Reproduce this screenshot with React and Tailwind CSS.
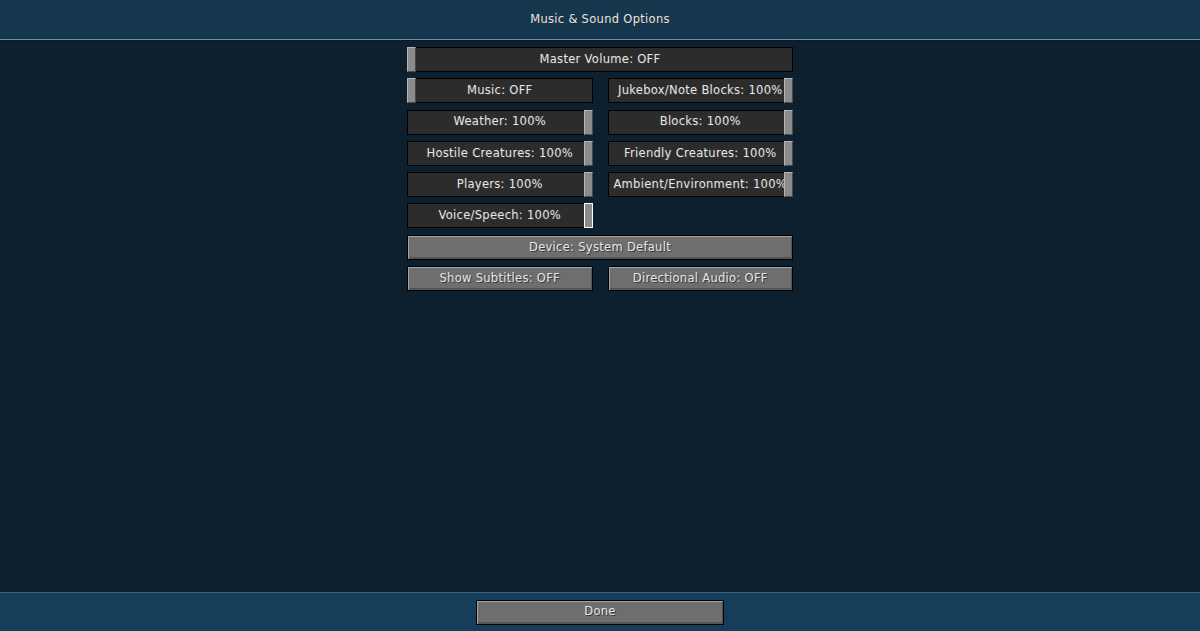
import React from 'react';

const font = { fontFamily: '"DejaVu Sans", "Liberation Sans", sans-serif' };

const Slider = ({ label, value, focused }) => {
  // handle sits at the left for OFF, at the right for 100%
  const atEnd = value > 0;
  return (
    <div className="relative h-[25px] bg-[#2c2c2c] border border-black flex items-center justify-center">
      <span className="text-[11.5px] text-[#e6e6e6] [text-shadow:1px_1px_0_#383838] tracking-[0.3px] whitespace-nowrap">
        {label}
      </span>
      <div
        className={`absolute -top-px -bottom-px w-[9px] bg-[#8b8b8b] ${
          atEnd ? '-right-px' : '-left-px'
        } ${
          focused
            ? 'border border-white'
            : 'border-t border-l border-t-[#b4b4b4] border-l-[#b4b4b4] border-b border-r border-b-[#4a4a4a] border-r-[#4a4a4a]'
        }`}
      />
    </div>
  );
};

const Button = ({ label, className = '' }) => (
  <div
    className={`h-[25px] bg-[#6e6e6e] border border-black flex items-center justify-center shadow-[inset_1px_1px_0_#a3a3a3,inset_-1px_-2px_0_#555] ${className}`}
  >
    <span className="text-[11.5px] text-[#e6e6e6] [text-shadow:1px_1px_0_#3a3a3a] tracking-[0.3px] whitespace-nowrap">
      {label}
    </span>
  </div>
);

export default function App() {
  const sliders = [
    { label: 'Music: OFF', value: 0 },
    { label: 'Jukebox/Note Blocks: 100%', value: 100 },
    { label: 'Weather: 100%', value: 100 },
    { label: 'Blocks: 100%', value: 100 },
    { label: 'Hostile Creatures: 100%', value: 100 },
    { label: 'Friendly Creatures: 100%', value: 100 },
    { label: 'Players: 100%', value: 100 },
    { label: 'Ambient/Environment: 100%', value: 100 },
    { label: 'Voice/Speech: 100%', value: 100, focused: true },
  ];

  return (
    <div className="h-screen w-full flex flex-col bg-[#0c2030]" style={font}>
      {/* Header */}
      <div className="h-[40px] shrink-0 bg-[#15384f] border-b border-b-[#6f8ea3] flex items-center justify-center">
        <span className="text-[11.5px] text-[#e6e6e6] [text-shadow:1px_1px_0_#2a2a2a] tracking-[0.3px]">
          Music &amp; Sound Options
        </span>
      </div>

      {/* Options list */}
      <div className="flex-1 flex justify-center pt-[6px] border-t border-t-[#0a1a26]">
        <div className="w-[386px] flex flex-col gap-[6.3px]">
          <Slider label="Master Volume: OFF" value={0} />
          <div className="grid grid-cols-2 gap-x-[15px] gap-y-[6.3px]">
            {sliders.map((s) => (
              <Slider key={s.label} label={s.label} value={s.value} focused={s.focused} />
            ))}
          </div>
          <Button label="Device: System Default" />
          <div className="grid grid-cols-2 gap-x-[15px]">
            <Button label="Show Subtitles: OFF" />
            <Button label="Directional Audio: OFF" />
          </div>
        </div>
      </div>

      {/* Footer */}
      <div className="h-[39px] shrink-0 bg-[#163d59] border-t border-t-[#3d6580] flex items-center justify-center">
        <Button label="Done" className="w-[248px]" />
      </div>
    </div>
  );
}
